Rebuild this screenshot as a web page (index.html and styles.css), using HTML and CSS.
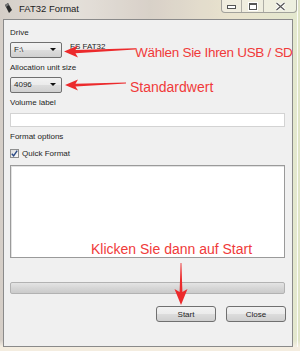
FILE: index.html
```html
<!DOCTYPE html>
<html lang="de">
<head>
    <meta charset="UTF-8">
    <title>FAT32 Format</title>
    <link rel="stylesheet" href="styles.css">
</head>
<body>
    <div class="window">
        <div class="titlebar">
            <svg class="app-icon" width="9" height="11" viewBox="0 0 9 11">
                <polygon points="1,2 4,0 8,7 5,10" fill="#2b2b2b"/>
                <polygon points="1,2 4,0 5,2 2,4" fill="#777"/>
            </svg>
            <span class="title">FAT32 Format</span>
            <div class="controls">
                <div class="ctl ctl-min"><span class="min-bar"></span></div>
                <div class="ctl ctl-max"><span class="max-box"></span></div>
                <div class="ctl ctl-close">
                    <svg width="11" height="9" viewBox="0 0 11 9">
                        <path d="M1.5 1 L9.5 8 M9.5 1 L1.5 8" stroke="#fff" stroke-width="3"/>
                        <path d="M1.5 1 L9.5 8 M9.5 1 L1.5 8" stroke="#555" stroke-width="1.2"/>
                    </svg>
                </div>
            </div>
        </div>

        <div class="client">
            <div class="label">Drive</div>
            <div class="combo-row">
                <div class="combo">F:\<span class="caret"></span></div>
                <span class="fs-info">FS FAT32</span>
            </div>

            <div class="label">Allocation unit size</div>
            <div class="combo-row">
                <div class="combo">4096<span class="caret"></span></div>
            </div>

            <div class="label">Volume label</div>
            <div class="text-input"></div>

            <div class="label">Format options</div>
            <div class="check-row">
                <span class="checkbox">
                    <svg width="7" height="7" viewBox="0 0 7 7">
                        <path d="M0.8 3.8 L2.6 5.8 L6.2 0.6" fill="none" stroke="#2a4a86" stroke-width="1.4"/>
                    </svg>
                </span>
                <span>Quick Format</span>
            </div>

            <div class="log-box"></div>

            <div class="progress"></div>

            <div class="buttons">
                <button class="btn">Start</button>
                <button class="btn">Close</button>
            </div>
        </div>

        <!-- red annotations drawn over the dialog -->
        <svg class="arrows" width="300" height="351" viewBox="0 0 300 351">
            <path d="M64 51.5 L78 45.5 L75.5 50 L135 48.3 L135 49.5 L75.5 53.2 L78 57.5 Z" fill="#ec2a2c"/>
            <path d="M65 85 L78 79.5 L75.5 83.8 L126 82.6 L126 83.6 L75.5 86.6 L78 90.5 Z" fill="#ec2a2c"/>
            <path d="M181 305 L174.5 289 L179.6 292 L180.6 263 L181.4 263 L182.4 292 L187.5 289 Z" fill="#ec2a2c"/>
        </svg>
        <div class="note note-drive">Wählen Sie Ihren USB / SD</div>
        <div class="note note-size">Standardwert</div>
        <div class="note note-start">Klicken Sie dann auf Start</div>
    </div>
</body>
</html>
```

FILE: styles.css
```css
body {
    margin: 0;
    width: 300px;
    height: 351px;
    overflow: hidden;
    font-family: "Liberation Sans", Arial, sans-serif;
    background:
        linear-gradient(180deg, rgba(255, 255, 255, 0) 340px, #f4ede0 347px),
        linear-gradient(90deg, #cec6be 0%, #e0dbd4 25%, #d2c9bf 50%, #e6dfc6 78%, #dfe4c6 100%);
}

.window {
    position: relative;
    width: 297px;
    height: 347px;
    background: rgba(255, 255, 255, 0.15);
    border-right: 1px solid rgba(255, 255, 255, 0.85);
}

.titlebar {
    height: 19px;
    display: flex;
    align-items: flex-start;
}

.app-icon {
    margin: 3px 0 0 4px;
}

.title {
    margin-left: 6px;
    font-size: 9.5px;
    line-height: 17px;
    color: #1c1c1c;
}

.controls {
    margin-left: auto;
    display: flex;
    height: 13px;
    box-sizing: border-box;
    border: 1px solid rgba(110, 110, 110, 0.6);
    border-top: none;
    border-radius: 0 0 4px 4px;
    background: rgba(255, 255, 255, 0.35);
}

.ctl {
    display: flex;
    align-items: center;
    justify-content: center;
    height: 12px;
}

.ctl + .ctl {
    border-left: 1px solid rgba(110, 110, 110, 0.5);
}

.ctl-min {
    width: 19px;
    align-items: flex-end;
}

.min-bar {
    width: 7px;
    height: 2px;
    margin-bottom: 3px;
    border: 1px solid #555;
    background: #fff;
}

.ctl-max {
    width: 21px;
}

.max-box {
    width: 6px;
    height: 4px;
    border: 1px solid #555;
    border-top-width: 2px;
    box-shadow: 0 0 0 1px #fff;
    background: #fff;
}

.ctl-close {
    width: 32px;
}

.client {
    box-sizing: border-box;
    margin-left: 3px;
    width: 290px;
    height: 328px;
    background: #f0f0f0;
    border: 1px solid #8a8a8a;
    padding: 7px 6px 0 6px;
    font-size: 8px;
    color: #1e1e1e;
}

.label {
    line-height: 11px;
}

.label + .combo-row,
.combo-row + .label,
.text-input + .label {
    margin-top: 4px;
}

.combo-row {
    display: flex;
    align-items: flex-start;
}

.combo {
    position: relative;
    box-sizing: border-box;
    width: 52px;
    height: 16px;
    padding-left: 3px;
    line-height: 14px;
    border: 1px solid #707070;
    border-radius: 2px;
    background: linear-gradient(#f3f3f3, #ebebeb 50%, #dddddd 50%, #d0d0d0);
}

.caret {
    position: absolute;
    right: 5px;
    top: 5px;
    border-left: 3px solid transparent;
    border-right: 3px solid transparent;
    border-top: 3px solid #111;
}

.fs-info {
    margin-left: 8px;
    line-height: 10px;
}

.text-input {
    margin-top: 5px;
    box-sizing: border-box;
    width: 275px;
    height: 14px;
    background: #fff;
    border: 1px solid #d3d3d3;
}

.check-row {
    margin-top: 6px;
    display: flex;
    align-items: center;
    gap: 3px;
    height: 11px;
}

.checkbox {
    box-sizing: border-box;
    width: 9px;
    height: 9px;
    display: flex;
    align-items: center;
    justify-content: center;
    border: 1px solid #8e8f8f;
    background: linear-gradient(135deg, #dcdcdc, #fbfbfb);
}

.log-box {
    margin-top: 6px;
    box-sizing: border-box;
    width: 275px;
    height: 93px;
    background: #fff;
    border: 1px solid #9a9a9a;
    box-shadow: inset 1px 1px 0 #e2e2e2;
}

.progress {
    margin-top: 24px;
    box-sizing: border-box;
    width: 275px;
    height: 12px;
    border: 1px solid #b2b2b2;
    border-radius: 2px;
    background: linear-gradient(#e4e4e4, #d6d6d6 50%, #cbcbcb);
}

.buttons {
    margin-top: 12px;
    width: 276px;
    display: flex;
    justify-content: flex-end;
    gap: 10px;
}

.btn {
    box-sizing: border-box;
    width: 60px;
    height: 16px;
    padding: 0;
    font-family: inherit;
    font-size: 8px;
    color: #1e1e1e;
    border: 1px solid #707070;
    border-radius: 3px;
    background: linear-gradient(#f2f2f2, #ebebeb 50%, #dddddd 50%, #cfcfcf);
}

.arrows {
    position: absolute;
    top: 0;
    left: 0;
    pointer-events: none;
}

.note {
    position: absolute;
    line-height: 1;
    color: #f03a3a;
    white-space: nowrap;
}

.note-drive {
    left: 135px;
    top: 46px;
    font-size: 13.5px;
    letter-spacing: -0.3px;
}

.note-size {
    left: 130px;
    top: 80px;
    font-size: 14px;
}

.note-start {
    left: 91px;
    top: 242px;
    font-size: 14px;
}
```
